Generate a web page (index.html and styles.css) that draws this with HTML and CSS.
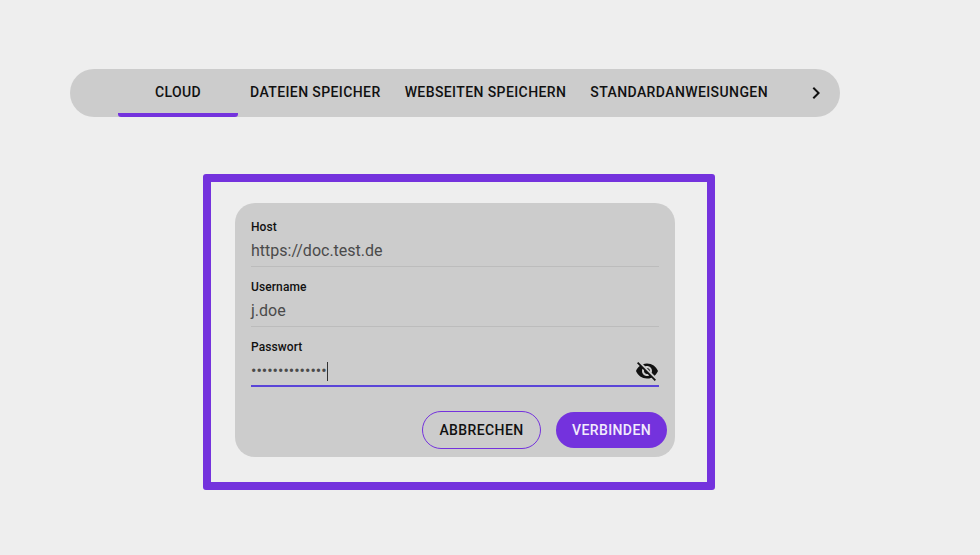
FILE: index.html
```html
<!DOCTYPE html>
<html lang="de">
<head>
<meta charset="utf-8">
<title>Cloud</title>
<link rel="stylesheet" href="styles.css">
</head>
<body>
<nav class="tabs">
  <div class="scroll-btn"></div>
  <div class="tab tab-active">CLOUD</div>
  <div class="tab">DATEIEN SPEICHER</div>
  <div class="tab">WEBSEITEN SPEICHERN</div>
  <div class="tab">STANDARDANWEISUNGEN</div>
  <div class="spacer"></div>
  <div class="scroll-btn">
    <svg class="icon" viewBox="0 0 24 24"><path d="M10 6L8.59 7.41 13.17 12l-4.58 4.59L10 18l6-6z"/></svg>
  </div>
</nav>
<section class="frame">
  <form class="card">
    <div class="field">
      <div class="label">Host</div>
      <div class="value">https://doc.test.de</div>
    </div>
    <div class="field">
      <div class="label">Username</div>
      <div class="value">j.doe</div>
    </div>
    <div class="field field-focus">
      <div class="label">Passwort</div>
      <div class="value value-row">
        <span class="dots">••••••••••••••</span><span class="caret"></span>
        <svg class="icon eye" viewBox="0 0 24 24"><path d="M12 7c2.76 0 5 2.24 5 5 0 .65-.13 1.26-.36 1.83l2.92 2.92c1.51-1.26 2.7-2.89 3.43-4.75-1.73-4.39-6-7.5-11-7.5-1.4 0-2.74.25-3.98.7l2.16 2.16C10.74 7.13 11.35 7 12 7zM2 4.27l2.28 2.28.46.46C3.08 8.3 1.78 10.02 1 12c1.73 4.39 6 7.5 11 7.5 1.55 0 3.03-.3 4.38-.84l.42.42L19.73 22 21 20.73 3.27 3 2 4.27zM7.53 9.8l1.55 1.55c-.05.21-.08.43-.08.65 0 1.66 1.34 3 3 3 .22 0 .44-.03.65-.08l1.55 1.55c-.67.33-1.41.53-2.2.53-2.76 0-5-2.24-5-5 0-.79.2-1.53.53-2.2zm4.31-.78l3.15 3.15.02-.16c0-1.66-1.34-3-3-3l-.17.01z"/></svg>
      </div>
    </div>
    <div class="actions">
      <button type="button" class="btn btn-outline">ABBRECHEN</button>
      <button type="button" class="btn btn-solid">VERBINDEN</button>
    </div>
  </form>
</section>
</body>
</html>
```
FILE: styles.css
```css
* { box-sizing: border-box; }
html, body { margin: 0; height: 100%; }
body {
  background: #eeeeee;
  font-family: Roboto, "Liberation Sans", sans-serif;
  color: #111;
  padding: 69px 0 0 70px;
  overflow: hidden;
}
.tabs {
  display: flex;
  width: 770px;
  height: 48px;
  background: #cccccc;
  border-radius: 24px;
  overflow: hidden;
}
.scroll-btn {
  flex: none;
  width: 48px;
  display: flex;
  align-items: center;
  justify-content: center;
}
.spacer { flex: 1; }
.tab {
  flex: none;
  min-width: 120px;
  height: 48px;
  padding: 2px 12px 0;
  display: flex;
  align-items: center;
  justify-content: center;
  font-size: 14px;
  font-weight: 500;
  letter-spacing: 0.4px;
  border-bottom: 4px solid transparent;
}
.tab-active {
  border-bottom-color: #7432dd;
  border-bottom-left-radius: 3px;
  border-bottom-right-radius: 3px;
}
.icon { display: block; width: 24px; height: 24px; fill: #111; }
.frame {
  width: 512px;
  height: 316px;
  margin: 57px 0 0 133px;
  border: 8px solid #7432dd;
  border-radius: 3px;
  padding: 21px 32px 25px 24px;
}
.card {
  height: 254px;
  background: #cccccc;
  border-radius: 20px;
  padding: 16px 8px 8px 16px;
}
.field {
  width: 408px;
  height: 48px;
  padding-top: 1px;
  border-bottom: 1px solid #bcbcbc;
}
.field + .field { margin-top: 12px; }
.field-focus { border-bottom: 2px solid #5a45d8; }
.label {
  font-size: 12px;
  line-height: 14px;
  font-weight: 500;
  letter-spacing: 0.1px;
  color: #111;
}
.value {
  margin-top: 5px;
  font-size: 16px;
  line-height: 24px;
  color: #4a4a4a;
}
.value-row { display: flex; align-items: center; height: 24px; }
.dots { font-size: 16px; }
.caret { width: 1px; height: 19px; background: #333; }
.eye { margin-left: auto; }
.actions {
  display: flex;
  justify-content: flex-end;
  align-items: center;
  gap: 15px;
  margin-top: 24px;
}
.btn {
  font-family: inherit;
  font-size: 14px;
  font-weight: 500;
  letter-spacing: 0.4px;
  border-radius: 19px;
  padding: 0;
}
.btn-outline {
  width: 119px;
  height: 38px;
  background: transparent;
  border: 1px solid #7432dd;
  color: #111;
}
.btn-solid {
  width: 111px;
  height: 36px;
  background: #7432dd;
  border: 0;
  color: #f2ecfc;
}
```
